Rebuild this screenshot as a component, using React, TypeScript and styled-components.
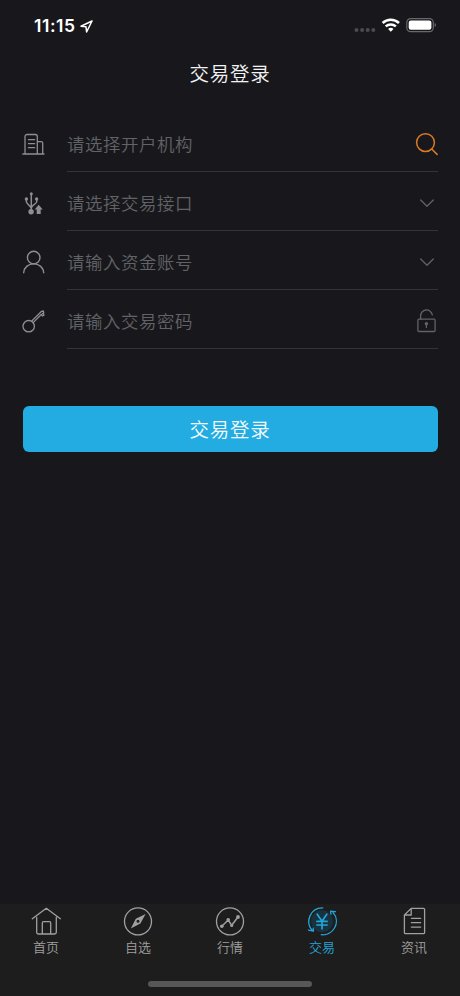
import React from "react";
import styled, { createGlobalStyle } from "styled-components";

const GlobalStyle = createGlobalStyle`
  * { box-sizing: border-box; }
  body { margin: 0; background: #18181c; }
`;

const Screen = styled.div`
  width: 460px;
  height: 996px;
  display: flex;
  flex-direction: column;
  background: #18181c;
  font-family: "Noto Sans CJK SC", sans-serif;
  overflow: hidden;
`;

const StatusBar = styled.header`
  height: 50px;
  flex: none;
  display: flex;
  justify-content: space-between;
  align-items: center;
  padding: 0 23px 0 34px;
`;

const Clock = styled.div`
  display: flex;
  align-items: center;
  gap: 4px;
  color: #fff;
  font: 600 17.5px/22px Inter, sans-serif;
  letter-spacing: 0.55px;
  padding-top: 2px;
`;

const Indicators = styled.div`
  display: flex;
  align-items: center;
`;

const Title = styled.h1`
  margin: 0;
  height: 63px;
  flex: none;
  padding-top: 8px;
  text-align: center;
  color: #f2f2f4;
  font-size: 19.5px;
  font-weight: 350;
  line-height: 30px;
  letter-spacing: 0.8px;
`;

const Form = styled.form`
  padding: 0 22.5px 0 22px;
  display: flex;
  flex-direction: column;
`;

const Row = styled.div`
  height: 59px;
  display: flex;
  gap: 21px;
`;

const RowIcon = styled.span`
  width: 24px;
  display: flex;
  align-items: center;
  padding: 4px 0 2px;
  color: #8f8f92;
`;

const Field = styled.div`
  flex: 1;
  display: flex;
  align-items: center;
  justify-content: space-between;
  padding-top: 4px;
  border-bottom: 1px solid #343438;
`;

const Placeholder = styled.span`
  color: #626367;
  font-size: 17.4px;
  font-weight: 350;
  line-height: 26px;
  letter-spacing: 0.6px;
`;

const Trailing = styled.span<{ $color: string }>`
  display: flex;
  color: ${(p) => p.$color};
`;

const Submit = styled.button`
  margin: 57px 0 0 0.5px;
  height: 46px;
  border: 0;
  border-radius: 6px;
  background: #23ace1;
  color: #f4fbff;
  font-family: inherit;
  font-size: 19.5px;
  font-weight: 350;
  line-height: 30px;
  letter-spacing: 0.8px;
  padding: 0;
`;

const TabBar = styled.nav`
  margin-top: auto;
  height: 92px;
  flex: none;
  background: #1d1d1d;
  display: flex;
  flex-direction: column;
`;

const Tabs = styled.div`
  display: grid;
  grid-template-columns: repeat(5, 1fr);
  padding-top: 3px;
  height: 77px;
`;

const Tab = styled.div<{ $active?: boolean }>`
  display: flex;
  flex-direction: column;
  align-items: center;
  color: ${(p) => (p.$active ? "#23a5d8" : "#a0a0a0")};
`;

const TabLabel = styled.span`
  font-size: 13px;
  font-weight: 350;
  line-height: 19px;
`;

const HomeIndicator = styled.div`
  width: 164px;
  height: 6px;
  border-radius: 3px;
  margin: 0 auto;
  background: #575757;
`;

type GlyphProps = { size?: number; width?: number; children: React.ReactNode };

const Glyph = ({ size = 24, width = 1.3, children }: GlyphProps) => (
  <svg
    width={size}
    height={size}
    viewBox={`0 0 ${size} ${size}`}
    fill="none"
    stroke="currentColor"
    strokeWidth={width}
    strokeLinecap="round"
    strokeLinejoin="round"
  >
    {children}
  </svg>
);

const Building = () => (
  <Glyph>
    <path d="M.8 22H22M3 22V4.5a2 2 0 0 1 2-2h8.3a2 2 0 0 1 2 2V22M15.3 9.6h3.9a1.5 1.5 0 0 1 1.5 1.5V22M6.4 7.7h6.2M6.4 11.7h6.2M6.4 15.7h6.2" />
  </Glyph>
);

const Usb = () => (
  <Glyph width={1.5}>
    <path d="M9.3 3v17M4.3 8v2.3c0 3.6 4.8 3.8 4.8 7M14.8 8v2.2c0 3.4-5.4 3.6-5.4 6.8" />
    <g fill="currentColor" stroke="none">
      <circle cx="9.3" cy="2.8" r="1.5" />
      <circle cx="4.4" cy="7.9" r="1.7" />
      <circle cx="14.6" cy="7.9" r="1.7" />
      <circle cx="9.1" cy="20.8" r="2.7" />
      <path d="M16.7 13.7l4 4.8h-2V23h-4v-4.5h-2z" />
    </g>
  </Glyph>
);

const User = () => (
  <Glyph width={1.4}>
    <circle cx="11.7" cy="7.6" r="6.3" />
    <path d="M1.7 22.8c.2-5.2 4.5-8.9 10-8.9s9.8 3.7 10 8.9" />
  </Glyph>
);

const Key = () => (
  <Glyph>
    <circle cx="6.7" cy="17.2" r="5.7" />
    <path d="M9.6 12.200L19.600 2.300l1.700-.3.500 1.600-1.500 1.300M11.200 13.600L19.300 5.500l1 1.500 1.700-.8-.6-1.800" />
  </Glyph>
);

const Search = () => (
  <Glyph width={1.5}>
    <circle cx="11.5" cy="10.600" r="8.900" />
    <path d="M17.9 17.200l5.200 5.200" />
  </Glyph>
);

const Chevron = () => (
  <Glyph>
    <path d="M6.700 9l6.300 6.200L19.300 9" />
  </Glyph>
);

const Lock = () => (
  <Glyph>
    <rect x="3.900" y="10.200" width="17.200" height="12.300" rx="1" />
    <path d="M6.600 10.200V7a5.900 5.900 0 0 1 11.700-1.200" />
    <circle cx="12.400" cy="14.800" r="1.100" fill="currentColor" />
    <path d="M12.400 15.500v3" />
  </Glyph>
);

const House = () => (
  <Glyph size={30}>
    <path d="M1.300 11.700L15.300 1.300l14 10.400M5.700 10.500v14.700a1.800 1.800 0 0 0 1.800 1.800h16a1.800 1.800 0 0 0 1.800-1.800V10.500M11.300 27V16a1.300 1.300 0 0 1 1.300-1.300h5.800a1.300 1.300 0 0 1 1.300 1.300v11" />
  </Glyph>
);

const Compass = () => (
  <Glyph size={30}>
    <circle cx="15" cy="14.400" r="13.500" />
    <path
      fill="currentColor"
      stroke="none"
      fillRule="evenodd"
      d="M22.600 7L17.400 16.500 7.800 21.400l5-9.600zM15 12.800a1.500 1.500 0 1 0 0 3 1.500 1.500 0 0 0 0-3z"
    />
  </Glyph>
);

const Trend = () => (
  <Glyph size={30}>
    <circle cx="15" cy="14.400" r="13.500" />
    <path strokeWidth="1.500" d="M6.800 19.200L13.200 13l3.500 5.300L23 10" />
    <g fill="currentColor" stroke="none">
      <circle cx="6.800" cy="19.200" r="1.800" />
      <circle cx="13.200" cy="12.800" r="1.800" />
      <circle cx="16.700" cy="18.500" r="1.600" />
      <circle cx="23" cy="10" r="1.900" />
    </g>
  </Glyph>
);

const Trade = () => (
  <Glyph size={30}>
    <circle cx="15" cy="14.300" r="11" fill="#18323f" stroke="none" />
    <path d="M15.700.9A13.500 13.500 0 0 0 5.500 23.600M1.500 23.200l5 .9-.3-3M14.300 27.700A13.500 13.500 0 0 0 26 5.400M28.500 4.700l-5-.6.5 3" />
    <path strokeWidth="1.700" d="M10.200 7.200L15 14.200l4.800-7M15 14.200v7.600M9.900 14.400h10.200M9.900 18h10.200" />
  </Glyph>
);

const News = () => (
  <Glyph size={30}>
    <path d="M12.200 1.400h12.200a1.200 1.200 0 0 1 1.200 1.200v22.900a1.200 1.200 0 0 1-1.200 1.200H6.600a1.200 1.200 0 0 1-1.200-1.200V8zM12.200 1.400V8H5.400M12.400 11.300h9.200M12.400 15.700h9.200M12.400 20.200h9.200" />
  </Glyph>
);

const rows = [
  { icon: <Building />, text: "请选择开户机构", end: <Search />, color: "#d97a25" },
  { icon: <Usb />, text: "请选择交易接口", end: <Chevron />, color: "#626266" },
  { icon: <User />, text: "请输入资金账号", end: <Chevron />, color: "#626266" },
  { icon: <Key />, text: "请输入交易密码", end: <Lock />, color: "#626266" },
];

const tabs = [
  { icon: <House />, label: "首页" },
  { icon: <Compass />, label: "自选" },
  { icon: <Trend />, label: "行情" },
  { icon: <Trade />, label: "交易", active: true },
  { icon: <News />, label: "资讯" },
];

export default function App() {
  return (
    <Screen>
      <GlobalStyle />
      <StatusBar>
        <Clock>
          11:15
          <svg width="13" height="13" viewBox="0 0 13 13" fill="none" stroke="#fff" strokeWidth="1.500" strokeLinejoin="round">
            <path d="M12 1L1 6.200l5 .6.600 5.200z" />
          </svg>
        </Clock>
        <Indicators>
          <svg width="83" height="18" viewBox="0 0 83 18">
            <g fill="#4b4b4f">
              <circle cx="2.500" cy="14" r="2" />
              <circle cx="8.100" cy="14" r="2" />
              <circle cx="13.700" cy="14" r="2" />
              <circle cx="19.300" cy="14" r="2" />
            </g>
            <g fill="none" stroke="#fff" strokeWidth="2.500">
              <path d="M28.600 7a12 12 0 0 1 16.400 0" />
              <path d="M31.700 10.400a7.500 7.500 0 0 1 10.200 0" />
            </g>
            <path fill="#fff" d="M36.800 15.800l-2.700-2.800a4 4 0 0 1 5.400 0z" />
            <rect x="52.800" y="2.600" width="26.500" height="13" rx="3.800" fill="none" stroke="#68686b" strokeWidth="1.200" />
            <rect x="54.700" y="4.500" width="22.700" height="9.200" rx="2.200" fill="#fff" />
            <path fill="#68686b" d="M80.600 7.100c1.900.8 1.900 3.200 0 4z" />
          </svg>
        </Indicators>
      </StatusBar>
      <Title>交易登录</Title>
      <Form>
        {rows.map((r) => (
          <Row key={r.text}>
            <RowIcon>{r.icon}</RowIcon>
            <Field>
              <Placeholder>{r.text}</Placeholder>
              <Trailing $color={r.color}>{r.end}</Trailing>
            </Field>
          </Row>
        ))}
        <Submit type="button">交易登录</Submit>
      </Form>
      <TabBar>
        <Tabs>
          {tabs.map((t) => (
            <Tab key={t.label} $active={t.active}>
              {t.icon}
              <TabLabel>{t.label}</TabLabel>
            </Tab>
          ))}
        </Tabs>
        <HomeIndicator />
      </TabBar>
    </Screen>
  );
}
